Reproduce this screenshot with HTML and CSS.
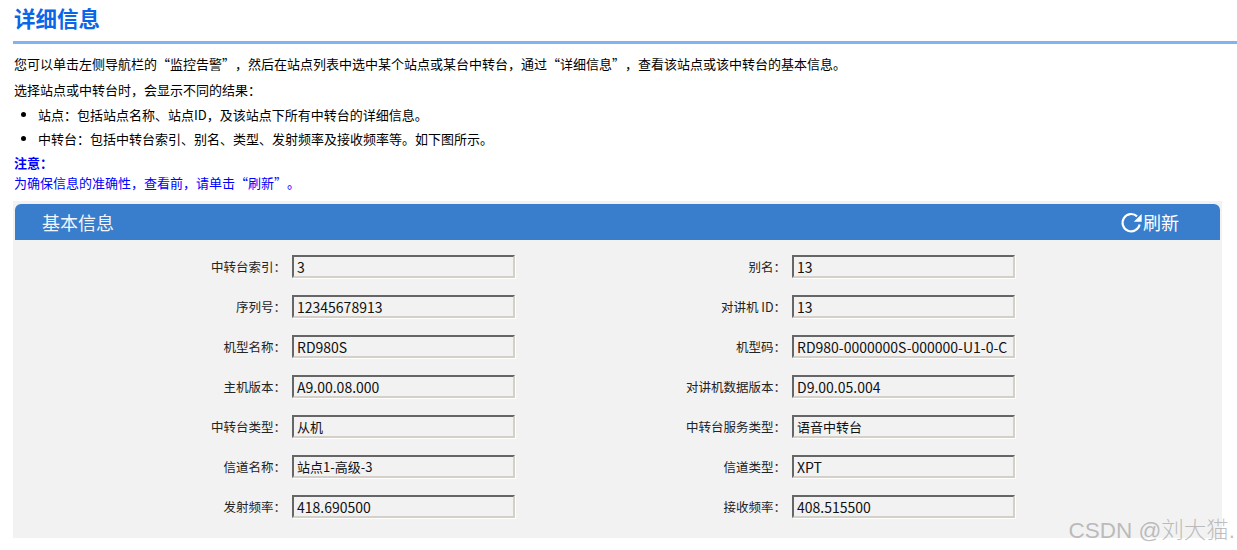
FILE: index.html
```html
<!DOCTYPE html>
<html lang="zh">
<head>
<meta charset="utf-8">
<title>详细信息</title>
<link rel="stylesheet" href="styles.css">
</head>
<body>
<h1 class="title">详细信息</h1>
<p class="para">您可以单击左侧导航栏的“监控告警”，然后在站点列表中选中某个站点或某台中转台，通过“详细信息”，查看该站点或该中转台的基本信息。</p>
<p class="para">选择站点或中转台时，会显示不同的结果：</p>
<ul class="list">
<li>站点：包括站点名称、站点ID，及该站点下所有中转台的详细信息。</li>
<li>中转台：包括中转台索引、别名、类型、发射频率及接收频率等。如下图所示。</li>
</ul>
<div class="note">
<div class="note-head">注意：</div>
<div>为确保信息的准确性，查看前，请单击“刷新”。</div>
</div>
<section class="panel">
<header class="panel-head">
<span class="panel-title">基本信息</span>
<span class="refresh">
<svg class="refresh-icon" viewBox="0 0 24 24" width="23" height="23" aria-hidden="true"><path d="M20.5 14A9 9 0 1 1 17.8 5.6" fill="none" stroke="#fff" stroke-width="2.2"/><path d="M22.6 3V11.2h-8.2z" fill="#fff"/></svg>
<span>刷新</span>
</span>
</header>
<div class="form">
<div class="field"><span class="label">中转台索引：</span><span class="value">3</span></div>
<div class="field"><span class="label">别名：</span><span class="value">13</span></div>
<div class="field"><span class="label">序列号：</span><span class="value">12345678913</span></div>
<div class="field"><span class="label">对讲机 ID：</span><span class="value">13</span></div>
<div class="field"><span class="label">机型名称：</span><span class="value">RD980S</span></div>
<div class="field"><span class="label">机型码：</span><span class="value">RD980-0000000S-000000-U1-0-C</span></div>
<div class="field"><span class="label">主机版本：</span><span class="value">A9.00.08.000</span></div>
<div class="field"><span class="label">对讲机数据版本：</span><span class="value">D9.00.05.004</span></div>
<div class="field"><span class="label">中转台类型：</span><span class="value value-cjk">从机</span></div>
<div class="field"><span class="label">中转台服务类型：</span><span class="value value-cjk">语音中转台</span></div>
<div class="field"><span class="label">信道名称：</span><span class="value value-cjk">站点1-高级-3</span></div>
<div class="field"><span class="label">信道类型：</span><span class="value">XPT</span></div>
<div class="field"><span class="label">发射频率：</span><span class="value">418.690500</span></div>
<div class="field"><span class="label">接收频率：</span><span class="value">408.515500</span></div>
</div>
</section>
<div class="watermark">CSDN @刘大猫.</div>
</body>
</html>
```
FILE: styles.css
```css
html, body {
  margin: 0;
  padding: 0;
  background: #fff;
  height: 550px;
  overflow: hidden;
}
body {
  position: relative;
  font-family: "Noto Sans CJK SC", "Liberation Sans", sans-serif;
  font-size: 13px;
  line-height: 18px;
  color: #000;
  padding-left: 13px;
  text-spacing-trim: space-all;
}
.title {
  margin: 0;
  height: 41px;
  box-sizing: content-box;
  padding-left: 1px;
  font-size: 21.5px;
  line-height: 35px;
  font-weight: 700;
  color: #0a66e8;
  border-bottom: 3px solid #80b2f4;
}
.para {
  margin: 0;
  padding-left: 1px;
  height: 25px;
  line-height: 25px;
  white-space: nowrap;
}
.para:first-of-type {
  margin-top: 7px;
  margin-bottom: 1px;
}
.list {
  margin: 0;
  padding: 0 0 0 25px;
}
.list li {
  height: 25px;
  line-height: 25px;
  white-space: nowrap;
}
.list li:last-child {
  line-height: 24px;
}
.note {
  margin-top: 1px;
  padding-left: 1px;
  color: #0000ff;
  font-size: 13px;
  line-height: 20px;
}
.note-head {
  font-weight: 700;
}
.panel {
  width: 1205px;
  height: 334px;
  margin-top: 8px;
  padding: 3px 2px 0;
  background: #f2f2f2;
  box-sizing: content-box;
}
.panel-head {
  height: 36px;
  display: flex;
  align-items: center;
  justify-content: space-between;
  padding: 0 41px 0 27px;
  background: #387ecd;
  border-radius: 6px 6px 0 0;
  color: #fff;
  font-size: 18px;
}
.panel-title {
  color: #f1f5fb;
}
.refresh {
  display: flex;
  align-items: center;
}
.refresh-icon {
  display: block;
}
.form {
  display: grid;
  grid-template-columns: 500px 500px;
  grid-auto-rows: 40px;
  padding: 15px 0 0 1px;
}
.field {
  display: flex;
  align-items: flex-start;
  gap: 6px;
}
.label {
  width: 270px;
  height: 24px;
  line-height: 24px;
  font-size: 12.5px;
  text-align: right;
  color: #222;
}
.value {
  width: 223px;
  height: 23px;
  box-sizing: border-box;
  padding-left: 3px;
  line-height: 20px;
  font-size: 14px;
  border: 2px solid;
  border-color: #666 #d4d0c8 #d4d0c8 #666;
  box-shadow: 1px 1px 0 #fff;
  color: #111;
  white-space: nowrap;
  overflow: hidden;
}
.value-cjk {
  font-size: 13px;
}
.watermark {
  position: absolute;
  right: 2px;
  top: 516px;
  font-family: "Liberation Sans", "Noto Sans CJK SC", sans-serif;
  font-size: 22.5px;
  line-height: 30px;
  font-weight: 300;
  color: rgba(130, 130, 130, 0.5);
  white-space: nowrap;
}
```
